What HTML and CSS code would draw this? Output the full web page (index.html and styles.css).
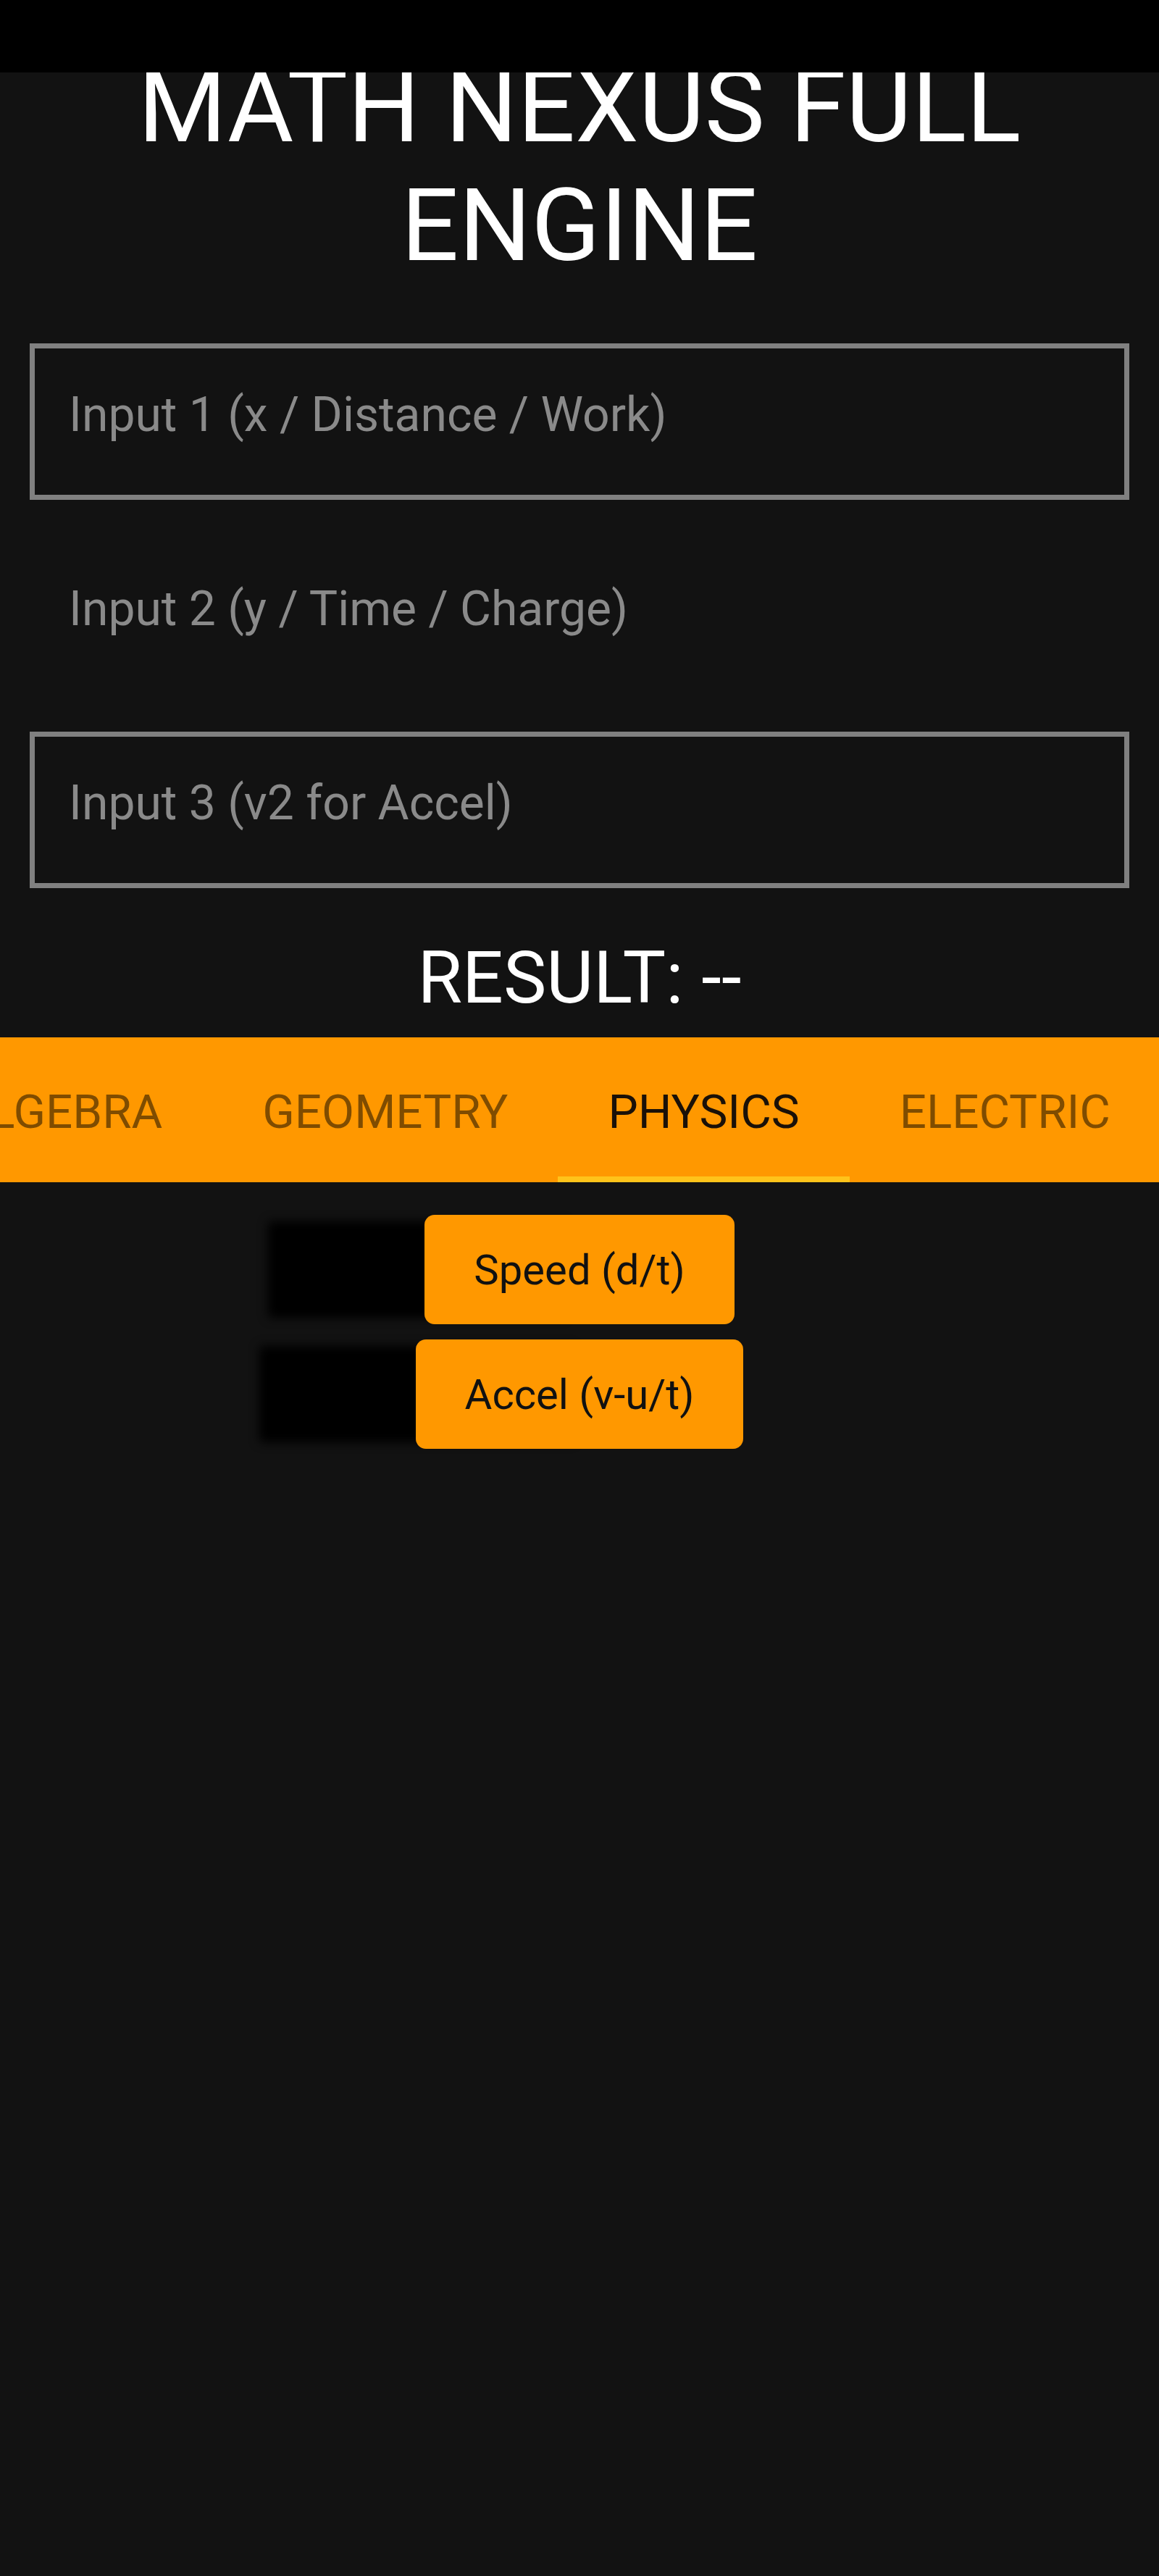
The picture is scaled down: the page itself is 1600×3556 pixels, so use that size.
FILE: index.html
```html
<!DOCTYPE html>
<html lang="en">
<head>
<meta charset="utf-8">
<title>Math Nexus Full Engine</title>
<link rel="stylesheet" href="styles.css">
</head>
<body>
<div class="statusbar"></div>
<main class="app">
  <h1 class="title">MATH NEXUS FULL ENGINE</h1>
  <div class="inputs">
    <input class="field" type="text" placeholder="Input 1 (x / Distance / Work)">
    <input class="field field-plain" type="text" placeholder="Input 2 (y / Time / Charge)">
    <input class="field" type="text" placeholder="Input 3 (v2 for Accel)">
  </div>
  <div class="result">RESULT: --</div>
  <nav class="tabs">
    <div class="tab">ALGEBRA</div>
    <div class="tab">GEOMETRY</div>
    <div class="tab tab-active">PHYSICS</div>
    <div class="tab">ELECTRIC</div>
  </nav>
  <div class="actions">
    <button class="action">Speed (d/t)</button>
    <button class="action">Accel (v-u/t)</button>
  </div>
</main>
</body>
</html>
```
FILE: styles.css
```css
html, body {
  margin: 0;
  padding: 0;
  background: #121212;
}
body {
  min-height: 3556px;
  font-family: Roboto, "Noto Sans", "Liberation Sans", sans-serif;
  position: relative;
}
.statusbar {
  position: absolute;
  top: 0;
  left: 0;
  right: 0;
  height: 100px;
  background: #000;
  z-index: 5;
}
.app {
  padding-top: 65px;
}
.title {
  margin: 0 0 81px;
  padding: 0 100px;
  font-size: 140px;
  line-height: 164px;
  font-weight: 400;
  color: #fff;
  text-align: center;
}
.inputs {
  display: flex;
  flex-direction: column;
  gap: 52px;
  padding: 0 41px;
}
.field {
  box-sizing: border-box;
  width: 100%;
  height: 216px;
  margin: 0;
  padding: 52px 0 72px 47px;
  border: 7px solid #808080;
  background: transparent;
  font-family: Roboto, "Noto Sans", "Liberation Sans", sans-serif;
  font-size: 66px;
  line-height: 78px;
  color: #fff;
  outline: none;
}
.field::placeholder {
  color: #8a8a8a;
}
.field-plain {
  border-color: transparent;
}
.result {
  margin-top: 65px;
  font-size: 100px;
  line-height: 117px;
  color: #fff;
  text-align: center;
}
.tabs {
  margin-top: 24px;
  height: 200px;
  background: #ff9800;
  display: flex;
  justify-content: flex-end;
  overflow: hidden;
  margin-right: -2px;
}
.tab {
  flex-shrink: 0;
  box-sizing: border-box;
  display: flex;
  align-items: center;
  padding: 12px 69px 0;
  font-size: 65.5px;
  color: rgba(0, 0, 0, 0.5);
  border-bottom: 8px solid transparent;
}
.tab-active {
  color: #1a1108;
  border-bottom-color: #ffc31a;
}
.actions {
  display: flex;
  flex-direction: column;
  align-items: center;
  gap: 21px;
  padding-top: 45px;
}
.action {
  height: 151px;
  padding: 0 68px;
  border: none;
  border-radius: 14px;
  background: #ff9800;
  color: #111;
  font-family: Roboto, "Noto Sans", "Liberation Sans", sans-serif;
  font-size: 58px;
  box-shadow: -225px 0 14px -9px #000;
}
```
